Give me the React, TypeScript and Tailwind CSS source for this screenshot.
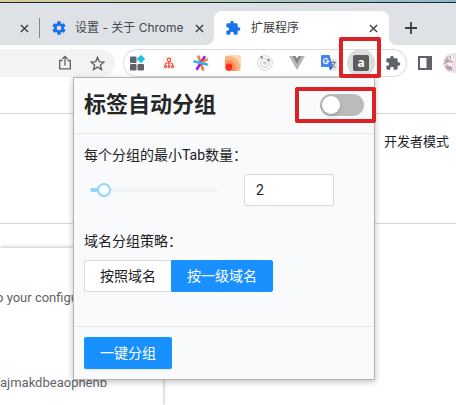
import { useState } from "react";
import type { ReactNode } from "react";

const ui = "font-['Roboto','Noto_Sans_CJK_SC',sans-serif]";

function CloseIcon() {
  return (
    <svg viewBox="0 0 10 10" className="size-[9px]" stroke="#3c4043" strokeWidth="1.5" fill="none">
      <path d="M1 1l8 8M9 1l-8 8" />
    </svg>
  );
}

function PuzzleIcon({ className }: { className: string }) {
  return (
    <svg viewBox="0 0 24 24" className={className} fill="currentColor">
      <path d="M20.5 11H19V7a2 2 0 0 0-2-2h-4V3.500a2.500 2.500 0 0 0-5 0V5H4a2 2 0 0 0-2 2v3.800h1.500a2.700 2.700 0 0 1 0 5.400H2V20a2 2 0 0 0 2 2h3.800v-1.500a2.700 2.700 0 0 1 5.400 0V22H17a2 2 0 0 0 2-2v-4h1.500a2.500 2.500 0 0 0 0-5z" />
    </svg>
  );
}

function GearIcon() {
  return (
    <svg viewBox="0 0 24 24" className="size-4 shrink-0" fill="#1a73e8">
      <path d="M19.430 12.980a7.800 7.800 0 0 0 0-1.960l2.110-1.650a.5.5 0 0 0 .12-.64l-2-3.460a.5.5 0 0 0-.61-.22l-2.490 1a7.300 7.300 0 0 0-1.690-.98l-.38-2.650A.5.5 0 0 0 14 2h-4a.5.5 0 0 0-.49.420l-.38 2.650c-.61.250-1.170.590-1.690.980l-2.490-1a.5.5 0 0 0-.61.220l-2 3.460a.5.5 0 0 0 .12.640l2.110 1.650a7.900 7.900 0 0 0 0 1.960l-2.110 1.650a.5.5 0 0 0-.12.640l2 3.460c.12.220.39.300.61.220l2.490-1c.52.400 1.080.730 1.690.980l.38 2.650c.03.240.24.420.49.420h4c.25 0 .46-.18.490-.42l.38-2.650c.61-.25 1.170-.59 1.690-.98l2.490 1c.23.090.49 0 .61-.22l2-3.460a.5.5 0 0 0-.12-.64zM12 15.500a3.500 3.500 0 1 1 0-7 3.500 3.500 0 0 1 0 7z" />
    </svg>
  );
}

function IconButton({ label, children }: { label: string; children: ReactNode }) {
  return (
    <button type="button" aria-label={label} className="flex size-7 shrink-0 items-center justify-center rounded-full">
      {children}
    </button>
  );
}

function TabStrip() {
  return (
    <div role="tablist" className="flex h-[42px] items-end bg-[#dee1e6]">
      <div className="flex h-[34px] w-10 shrink-0 items-center justify-end gap-[10px]">
        <button type="button" aria-label="关闭">
          <CloseIcon />
        </button>
        <span className="h-5 w-px bg-[#85888c]" />
      </div>
      <div className="flex h-[34px] w-[174px] shrink-0 items-center pr-[10px] pl-[11px]">
        <GearIcon />
        <button type="button" role="tab" aria-selected="false" className="ml-2 flex-1 text-left font-['Inter','Noto_Sans_CJK_SC',sans-serif] text-xs whitespace-nowrap text-[#46494d]">
          设置 - 关于 Chrome
        </button>
        <button type="button" aria-label="关闭">
          <CloseIcon />
        </button>
      </div>
      <div className="relative flex h-[34px] w-[175px] shrink-0 items-center rounded-t-lg bg-white pr-[11px] pl-[11px]">
        <svg viewBox="0 0 8 8" className="absolute bottom-0 -left-2 size-2" fill="#fff">
          <path d="M8 0v8H0a8 8 0 0 0 8-8z" />
        </svg>
        <svg viewBox="0 0 8 8" className="absolute -right-2 bottom-0 size-2" fill="#fff">
          <path d="M0 0v8h8a8 8 0 0 1-8-8z" />
        </svg>
        <PuzzleIcon className="size-4 shrink-0 text-[#1a73e8]" />
        <button type="button" role="tab" aria-selected="true" className="ml-[10px] flex-1 text-left text-xs text-[#3c4043]">
          扩展程序
        </button>
        <button type="button" aria-label="关闭">
          <CloseIcon />
        </button>
      </div>
      <button type="button" aria-label="新标签页" className="ml-4 flex h-[34px] items-center">
        <svg viewBox="0 0 12 12" className="size-3" stroke="#3c4043" strokeWidth="1.8">
          <path d="M6 0v12M0 6h12" />
        </svg>
      </button>
    </div>
  );
}

function ExtensionIcons() {
  return (
    <div className="flex h-7 shrink-0 gap-1 rounded-full inset-ring inset-ring-[#dadce0]">
      <IconButton label="小工具">
        <svg viewBox="0 0 16 16" className="size-4">
          <g fill="#5f6368">
            <rect x="1" y="1.500" width="6.500" height="6.500" rx="1" />
            <rect x="1" y="9" width="6.500" height="6.500" rx="1" />
            <rect x="8.500" y="9" width="6.500" height="6.500" rx="1" />
          </g>
          <rect x="9" y="1" width="6" height="6" rx="1" fill="#1fc0f1" transform="rotate(45 12 4)" />
        </svg>
      </IconButton>
      <IconButton label="站点结构">
        <svg viewBox="0 0 14 14" className="size-[14px]" fill="none" stroke="#e2533c" strokeWidth="1.200">
          <rect x="1" y="1" width="12" height="12" rx="1" fill="#fff8f6" stroke="#eee4e1" strokeWidth=".8" />
          <circle cx="7" cy="3.800" r="1.700" />
          <path d="M7 5.500v4M3.500 9.500V8.200Q3.500 7 5 7h4q1.500 0 1.500 1.200v1.300" />
          <circle cx="3.500" cy="10.500" r="1" />
          <circle cx="7" cy="10.500" r="1" />
          <circle cx="10.500" cy="10.500" r="1" />
        </svg>
      </IconButton>
      <IconButton label="星标">
        <svg viewBox="0 0 16 16" className="size-4" strokeWidth="2.600" strokeLinecap="round">
          <path d="M5.500 1.500l4.500 13" stroke="#ff7844" />
          <path d="M11.500 2L4 14" stroke="#a21bd5" />
          <path d="M14 4.500L9 7.500" stroke="#f08044" />
          <path d="M1.500 6.500L14 9.500" stroke="#31b5e8" />
        </svg>
      </IconButton>
      <IconButton label="订阅">
        <svg viewBox="0 0 16 16" className="size-4">
          <defs>
            <clipPath id="feed-clip"><rect width="16" height="16" rx="3.500" /></clipPath>
          </defs>
          <g clipPath="url(#feed-clip)">
            <rect width="16" height="16" fill="#fcd8ae" />
            <circle cx="3" cy="13" r="12" fill="#fcb383" />
            <circle cx="3" cy="13" r="8" fill="#ff8b59" />
            <circle cx="4" cy="12" r="3.400" fill="#f92e20" />
          </g>
        </svg>
      </IconButton>
      <IconButton label="轨道">
        <svg viewBox="0 0 16 16" className="size-4" fill="none" stroke="#c4c6c8">
          <circle cx="8" cy="8" r="7.300" strokeWidth=".8" />
          <circle cx="8" cy="8" r="4.300" />
          <circle cx="8" cy="8" r="2" fill="#cfd0d2" stroke="none" />
          <circle cx="4.500" cy="2.200" r="1.500" fill="#96999c" stroke="none" />
          <circle cx="11.500" cy="5" r="1.500" fill="#96999c" stroke="none" />
        </svg>
      </IconButton>
      <IconButton label="Vue">
        <svg viewBox="0 0 16 14" className="h-[14px] w-4">
          <path d="M0 0h3.500L8 7.500 12.500 0H16L8 14z" fill="#b5b5b5" />
          <path d="M3.500 0h2.900L8 2.600 9.600 0h2.900L8 7.900z" fill="#7e8285" />
        </svg>
      </IconButton>
      <IconButton label="翻译">
        <svg viewBox="0 0 16 16" className="size-4">
          <path d="M6 4h9a1 1 0 0 1 1 1v9.500a1 1 0 0 1-1 1H9z" fill="#dfe1e5" />
          <path d="M1 0h7.500l3.500 12H1a1 1 0 0 1-1-1V1a1 1 0 0 1 1-1z" fill="#4383ed" />
          <path d="M8 12h4l-3 3.500z" fill="#2859bb" />
          <path d="M7 4.500A2.500 2.500 0 1 0 7.500 6.200H5" stroke="#fff" strokeWidth="1.200" fill="none" />
          <path d="M10 7.500h5M12.500 6v1.500M14 7.500q-.8 3-3.500 4.500M11 9q1 2.500 3.500 3.500" stroke="#6d747c" strokeWidth=".9" fill="none" />
        </svg>
      </IconButton>
      <button type="button" aria-label="标签自动分组" className="relative flex size-7 items-center justify-center rounded-full bg-[#dcdcdc]">
        <span className="flex size-4 items-center justify-center rounded-xs bg-[#5d5d5d] pb-px font-['Noto_Sans',sans-serif] text-xs leading-4 font-bold text-white">
          a
        </span>
        <span className="pointer-events-none absolute -top-3 -left-2 z-20 h-[41px] w-[42px] rounded-xs border-4 border-[#dc2224]" />
      </button>
      <IconButton label="扩展程序">
        <PuzzleIcon className="size-4 text-[#5f6368]" />
      </IconButton>
    </div>
  );
}

function Toolbar() {
  return (
    <div className="flex h-8 items-center bg-white pt-1">
      <div className="flex h-7 w-[115px] shrink-0 items-center justify-end gap-1 rounded-r-full bg-[#f1f3f4] pr-1">
        <IconButton label="分享">
          <svg viewBox="0 0 14 16" className="h-4 w-[14px]" fill="none" stroke="#5f6368" strokeWidth="1.300">
            <path d="M4.500 5.500H1.700v8.300h10.600V5.500H9.500M7 10.500V1.500M4.300 4L7 1.300 9.700 4" />
          </svg>
        </IconButton>
        <IconButton label="添加书签">
          <svg viewBox="0 0 16 16" className="size-[15px]" fill="none" stroke="#5f6368" strokeWidth="1.500">
            <path d="M8 1.500l1.900 4.500 4.900.4-3.700 3.200 1.100 4.800L8 11.800l-4.200 2.600 1.100-4.800L1.200 6.400 6.100 6z" />
          </svg>
        </IconButton>
      </div>
      <div className="ml-2">
        <ExtensionIcons />
      </div>
      <div className="ml-1 flex shrink-0 items-center gap-1">
        <IconButton label="侧边栏">
          <svg viewBox="0 0 14 14" className="size-[14px]">
            <path fill="#5f6368" fillRule="evenodd" d="M0 0h14v14H0zM2 2v10h6.500V2z" />
          </svg>
        </IconButton>
        <button type="button" aria-label="用户" className="shrink-0">
          <svg viewBox="0 0 20 20" className="size-5">
            <circle cx="10" cy="10" r="10" fill="#eadfe6" />
            <path d="M1 8l4-5 3 3-3 4zM2 13l4-2 3 6-4 1z" fill="#c3abb9" />
            <path d="M5 5l4-3 2 5-3 2zM4 10l5 1-2 3z" fill="#fff" />
            <path d="M1 11l4-3M7 3l1 4M7 13l2 4" stroke="#8b8ba3" />
            <path d="M6 8l4 1M3 14l4 1" stroke="#d77281" />
          </svg>
        </button>
      </div>
    </div>
  );
}

function GroupingPopup() {
  const [enabled, setEnabled] = useState(false);
  const [count, setCount] = useState(2);
  const [strategy, setStrategy] = useState("root");
  const max = 17;
  return (
    <section className="absolute top-[77px] left-[73px] z-10 w-[302px] border border-[#b4b5b7] bg-[#f9fafc] text-sm text-[#202122] shadow-[0_2px_6px_rgba(0,0,0,0.25)]">
      <header className="flex h-14 items-center justify-between border-b border-[#e6e7e9] px-[10px] pb-px">
        <h1 className="text-[22px] leading-8 font-bold text-[#262626]">标签自动分组</h1>
        <label className="relative flex">
          <input
            type="checkbox"
            role="switch"
            aria-label="标签自动分组"
            checked={enabled}
            onChange={(e) => setEnabled(e.target.checked)}
            className="h-[22px] w-11 appearance-none rounded-full bg-[#bbbbbc] p-0.5 before:block before:size-[18px] before:rounded-full before:bg-white before:shadow-[0_2px_4px_rgba(0,35,11,0.2)] checked:bg-[#1890ff] checked:before:ml-[22px]"
          />
          <span className="pointer-events-none absolute -top-[7px] -right-3 h-[36px] w-[81px] rounded-xs border-4 border-[#dc2224]" />
        </label>
      </header>
      <div className="px-[10px] pt-[10px] pb-[34px]">
        <label htmlFor="min-tabs" className="block leading-[22px]">
          每个分组的最小Tab数量：
        </label>
        <div className="mt-2 flex items-center pl-[6px]">
          <input
            type="range"
            aria-label="最小Tab数量"
            min={1}
            max={max}
            value={count}
            onChange={(e) => setCount(Number(e.target.value))}
            style={{ backgroundImage: `linear-gradient(to right, #91d5ff ${6 + ((count - 1) * 94) / (max - 1)}%, #f3f3f4 0)` }}
            className="h-1 w-32 appearance-none rounded-full [&::-webkit-slider-thumb]:size-[14px] [&::-webkit-slider-thumb]:appearance-none [&::-webkit-slider-thumb]:rounded-full [&::-webkit-slider-thumb]:border-2 [&::-webkit-slider-thumb]:border-solid [&::-webkit-slider-thumb]:border-[#91d5ff] [&::-webkit-slider-thumb]:bg-white"
          />
          <input
            id="min-tabs"
            type="text"
            inputMode="numeric"
            value={count}
            onChange={(e) => setCount(Number(e.target.value) || 1)}
            className="ml-[26px] h-8 w-[90px] rounded-xs border border-[#d9d9d9] bg-white px-[11px]"
          />
        </div>
        <fieldset className="mt-6">
          <legend className="leading-[22px]">域名分组策略：</legend>
          <div className="mt-2 flex">
            <label className={strategy === "full" ? "flex h-8 items-center rounded-l-xs border border-[#1890ff] bg-[#1890ff] px-[15px] text-white" : "flex h-8 items-center rounded-l-xs border border-r-0 border-[#d9d9d9] bg-white px-[15px]"}>
              <input type="radio" name="strategy" className="sr-only" checked={strategy === "full"} onChange={() => setStrategy("full")} />
              按照域名
            </label>
            <label className={strategy === "root" ? "flex h-8 items-center rounded-r-xs border border-[#1890ff] bg-[#1890ff] px-[15px] text-white" : "flex h-8 items-center rounded-r-xs border border-l-0 border-[#d9d9d9] bg-white px-[15px]"}>
              <input type="radio" name="strategy" className="sr-only" checked={strategy === "root"} onChange={() => setStrategy("root")} />
              按一级域名
            </label>
          </div>
        </fieldset>
      </div>
      <footer className="border-t border-[#e6e7e9] p-[10px]">
        <button type="button" className="block h-8 rounded-xs bg-[#1890ff] px-4 text-white shadow-[0_2px_0_rgba(0,0,0,0.04)]">
          一键分组
        </button>
      </footer>
    </section>
  );
}

export default function App() {
  return (
    <div className={`${ui} relative flex h-screen flex-col overflow-hidden bg-white`}>
      <div className="h-[3px] shrink-0 border-b border-[#182936] bg-linear-to-r from-[#dccb97] via-[#b6cbb9] to-[#91b5cc]" />
      <TabStrip />
      <Toolbar />
      <main className="flex flex-1 flex-col pt-px">
        <div className="h-9 border-b border-[#d5d5d5]" />
        <div className="flex h-[110px] justify-end border-b border-[#d5d5d5] pt-[18px] pr-[7px] text-[13px] leading-5 text-[#202124]">
          开发者模式
        </div>
        <article className="mt-6 w-[163px] flex-1 pt-10 text-[13px] leading-5 whitespace-nowrap text-[#5f6368] shadow-[0_0_4px_rgba(0,0,0,0.35)]">
          <p className="-ml-1">o your configuration</p>
          <p className="mt-[65px]">ajmakdbeaophenb</p>
        </article>
      </main>
      <GroupingPopup />
    </div>
  );
}
